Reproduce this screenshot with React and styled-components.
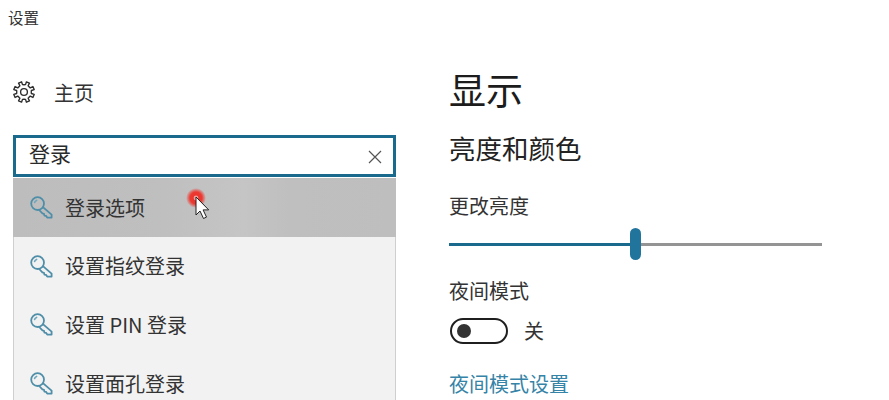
import React from "react";
import styled, { createGlobalStyle } from "styled-components";

const Global = createGlobalStyle`
  html, body { margin: 0; padding: 0; background: #fff; overflow: hidden; }
  body { font-family: "Noto Sans CJK SC", "Liberation Sans", sans-serif; }
`;

const Page = styled.div`
  width: 889px;
  height: 400px;
  overflow: hidden;
  display: flex;
  flex-direction: column;
  color: #222;
`;
const TitleBar = styled.div`
  box-sizing: border-box;
  height: 36px;
  padding: 0 0 3px 8px;
  display: flex;
  align-items: center;
  font-size: 15.5px;
  color: #333;
`;
const Body = styled.div`
  display: flex;
  flex: 1;
  min-height: 0;
`;
const Sidebar = styled.aside`
  width: 383px;
  margin-left: 13px;
  display: flex;
  flex-direction: column;
`;
const HomeRow = styled.div`
  box-sizing: border-box;
  height: 42px;
  margin-top: 36px;
  padding-bottom: 2px;
  display: flex;
  align-items: center;
  gap: 19px;
  font-size: 20px;
  color: #333;
`;
const SearchBox = styled.div`
  box-sizing: border-box;
  height: 42px;
  margin-top: 21px;
  border: 3px solid #1a6a8e;
  padding: 0 11px 0 13px;
  display: flex;
  align-items: center;
  justify-content: space-between;
  font-size: 21px;
  color: #2a2a2a;
`;
const SearchText = styled.span`
  line-height: 30px;
  padding-bottom: 7px;
`;
const CloseIcon = styled.svg`
  margin-top: 2px;
`;
const Results = styled.div`
  box-sizing: border-box;
  margin-top: 1px;
  flex: 1;
  min-height: 0;
  background: #f2f2f2;
  border-left: 1px solid #cfcfcf;
  border-right: 1px solid #cfcfcf;
  display: flex;
  flex-direction: column;
`;
const Row = styled.div`
  position: relative;
  flex: none;
  height: 58.6px;
  margin: 0 -1px;
  padding-left: 16px;
  display: flex;
  align-items: center;
  gap: 12px;
  font-size: 20px;
  color: #333;
  background: ${(p) =>
    p.$active
      ? "linear-gradient(90deg,#bdbdbd 0%,#bfbfbf 40%,#c5c5c5 60%,#bfbfbf 72%,#bebebe 100%)"
      : "transparent"};
`;
const Pointer = styled.svg`
  position: absolute;
  left: 172px;
  top: 9px;
`;
const Main = styled.main`
  margin-left: 53px;
  display: flex;
  flex-direction: column;
  align-items: flex-start;
`;
const H1 = styled.h1`
  margin: 26px 0 0;
  font-size: 37px;
  line-height: 54px;
  font-weight: 400;
  color: #1c1c1c;
`;
const H2 = styled.h2`
  margin: 13px 0 0;
  font-size: 26.5px;
  line-height: 38px;
  font-weight: 400;
  color: #222;
`;
const Label = styled.div`
  margin-top: ${(p) => p.$top}px;
  font-size: 20px;
  line-height: 30px;
  color: #333;
`;
const Slider = styled.div`
  margin-top: 7px;
  width: 373px;
  height: 32px;
  display: flex;
  align-items: center;
`;
const Filled = styled.div`
  width: 181px;
  height: 3px;
  background: #1a6a8e;
`;
const Rest = styled.div`
  flex: 1;
  height: 3px;
  background: #949494;
`;
const Thumb = styled.div`
  width: 11px;
  height: 32px;
  border-radius: 6px;
  background: #21749c;
`;
const ToggleRow = styled.div`
  margin-top: 10px;
  display: flex;
  align-items: center;
  gap: 16px;
  font-size: 20px;
  color: #333;
`;
const Toggle = styled.div`
  box-sizing: border-box;
  margin-left: 1px;
  width: 58px;
  height: 26px;
  border: 2.5px solid #1f1f1f;
  border-radius: 13px;
  padding-left: 5px;
  display: flex;
  align-items: center;
`;
const Knob = styled.div`
  width: 14px;
  height: 14px;
  border-radius: 50%;
  background: #333;
`;
const SettingsLink = styled.a`
  margin-top: 24px;
  font-size: 20px;
  line-height: 30px;
  color: #3583a6;
`;

// Eight-tooth gear outline, computed once
const gearPath = (() => {
  const pts = [];
  const n = 8;
  for (let i = 0; i < n; i++) {
    const a = ((i + 0.5) / n) * Math.PI * 2;
    const step = (Math.PI * 2) / n;
    [
      [-0.5, 7.9],
      [-0.24, 8.2],
      [-0.2, 11.4],
      [0.2, 11.4],
      [0.24, 8.2],
      [0.5, 7.9],
    ].forEach(([f, r]) => {
      const t = a + f * step;
      pts.push(`${(12 + r * Math.cos(t)).toFixed(2)} ${(12 + r * Math.sin(t)).toFixed(2)}`);
    });
  }
  return `M${pts.join("L")}Z`;
})();

const Gear = () => (
  <svg width="22" height="22" viewBox="0 0 24 24" fill="none" stroke="#2e2e2e" strokeWidth="1.5" strokeLinejoin="round">
    <path d={gearPath} />
    <circle cx="12" cy="12" r="3.7" />
  </svg>
);

const Close = () => (
  <CloseIcon width="14" height="14" viewBox="0 0 14 14" stroke="#555" strokeWidth="1.2" fill="none">
    <path d="M1 1l12 12M13 1L1 13" />
  </CloseIcon>
);

const Key = () => (
  <svg width="24" height="24" viewBox="0 0 24 24" fill="none" strokeLinecap="round" strokeLinejoin="round">
    <circle cx="8.6" cy="8.6" r="6.4" stroke="#4f8ea8" strokeWidth="1.8" />
    <path d="M5.6 7.4a3.4 3.4 0 0 1 2-2" stroke="#6fa5bb" strokeWidth="1.6" />
    <path d="M14.2 12.4l8.4 7.2v3h-4.4l-1.2-1.8-1.6-.2-.4-1.8-1.6-.4-3.2-3.4" stroke="#4f8ea8" strokeWidth="1.8" />
  </svg>
);

const CursorMark = () => (
  <Pointer width="36" height="36" viewBox="0 0 36 36">
    <defs>
      <radialGradient id="glow">
        <stop offset="0" stopColor="#e8302a" />
        <stop offset="0.6" stopColor="#ec3a32" />
        <stop offset="1" stopColor="#ec3a32" stopOpacity="0" />
      </radialGradient>
    </defs>
    <circle cx="11" cy="11" r="10" fill="url(#glow)" />
    <circle cx="11" cy="11" r="2.4" fill="#f3a09a" />
    <path d="M11 10v18l4-4 3.5 7.5 3-1.4-3.4-7.2h5.6z" fill="#fff" stroke="#222" strokeWidth="1" strokeLinejoin="round" />
  </Pointer>
);

const results = ["登录选项", "设置指纹登录", "设置 PIN 登录", "设置面孔登录"];

export default function App() {
  return (
    <Page>
      <Global />
      <TitleBar>设置</TitleBar>
      <Body>
        <Sidebar>
          <HomeRow>
            <Gear />
            主页
          </HomeRow>
          <SearchBox>
            <SearchText>登录</SearchText>
            <Close />
          </SearchBox>
          <Results>
            {results.map((r, i) => (
              <Row key={r} $active={i === 0}>
                <Key />
                {r}
                {i === 0 && <CursorMark />}
              </Row>
            ))}
          </Results>
        </Sidebar>
        <Main>
          <H1>显示</H1>
          <H2>亮度和颜色</H2>
          <Label $top={24}>更改亮度</Label>
          <Slider>
            <Filled />
            <Thumb />
            <Rest />
          </Slider>
          <Label $top={16}>夜间模式</Label>
          <ToggleRow>
            <Toggle>
              <Knob />
            </Toggle>
            关
          </ToggleRow>
          <SettingsLink>夜间模式设置</SettingsLink>
        </Main>
      </Body>
    </Page>
  );
}
